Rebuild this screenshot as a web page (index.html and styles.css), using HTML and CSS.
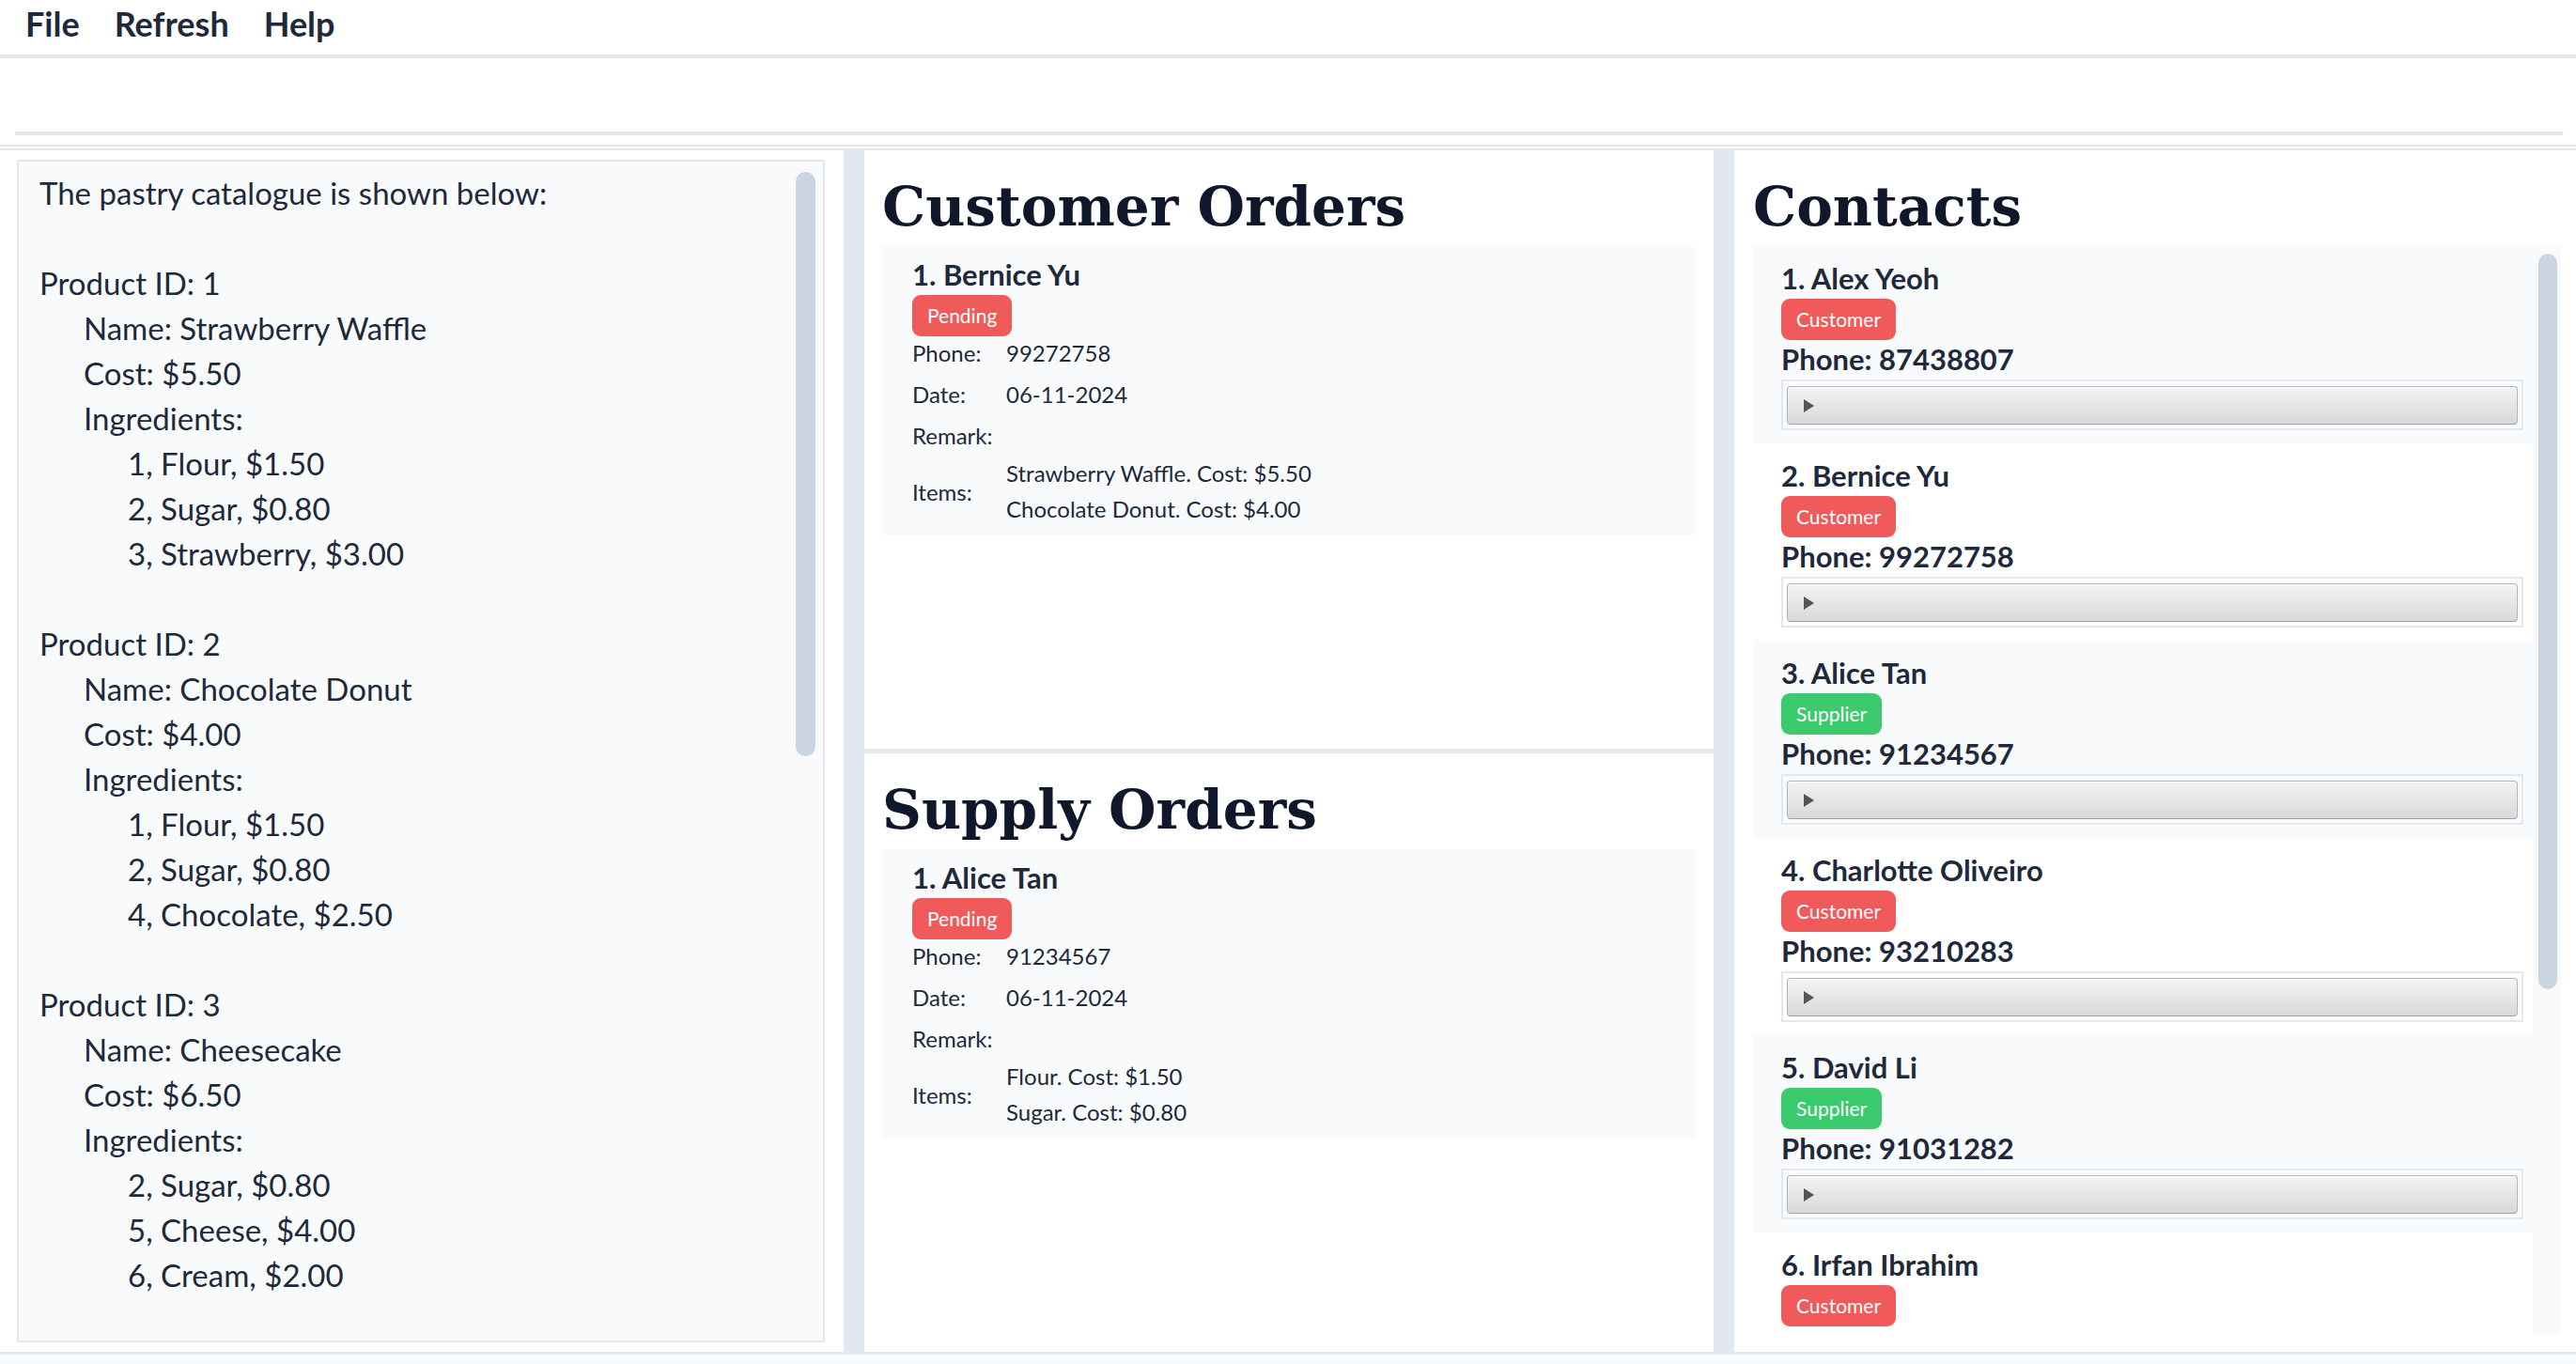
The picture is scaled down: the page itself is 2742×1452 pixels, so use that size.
FILE: index.html
```html
<!DOCTYPE html>
<html lang="en">
<head>
<meta charset="utf-8">
<title>Pastry Orders</title>
<link rel="stylesheet" href="styles.css">
</head>
<body>
<nav class="menubar">
  <span class="menu-item">File</span>
  <span class="menu-item">Refresh</span>
  <span class="menu-item">Help</span>
</nav>
<div class="command"></div>
<div class="result"></div>
<main class="main">
  <section class="left">
    <div class="catalogue">
      <div class="ln">The pastry catalogue is shown below:</div>
      <div class="ln blank"></div>
      <div class="ln">Product ID: 1</div>
      <div class="ln i1">Name: Strawberry Waffle</div>
      <div class="ln i1">Cost: $5.50</div>
      <div class="ln i1">Ingredients:</div>
      <div class="ln i2">1, Flour, $1.50</div>
      <div class="ln i2">2, Sugar, $0.80</div>
      <div class="ln i2">3, Strawberry, $3.00</div>
      <div class="ln blank"></div>
      <div class="ln">Product ID: 2</div>
      <div class="ln i1">Name: Chocolate Donut</div>
      <div class="ln i1">Cost: $4.00</div>
      <div class="ln i1">Ingredients:</div>
      <div class="ln i2">1, Flour, $1.50</div>
      <div class="ln i2">2, Sugar, $0.80</div>
      <div class="ln i2">4, Chocolate, $2.50</div>
      <div class="ln blank"></div>
      <div class="ln">Product ID: 3</div>
      <div class="ln i1">Name: Cheesecake</div>
      <div class="ln i1">Cost: $6.50</div>
      <div class="ln i1">Ingredients:</div>
      <div class="ln i2">2, Sugar, $0.80</div>
      <div class="ln i2">5, Cheese, $4.00</div>
      <div class="ln i2">6, Cream, $2.00</div>
      <div class="thumb thumb-left"></div>
    </div>
  </section>
  <div class="divider"></div>
  <section class="orders">
    <div class="order-section customer">
      <h2 class="title">Customer Orders</h2>
      <div class="order-card">
        <div class="name">1. Bernice Yu</div>
        <span class="badge red">Pending</span>
        <div class="fields">
          <span class="label">Phone:</span><span class="value">99272758</span>
          <span class="label">Date:</span><span class="value">06-11-2024</span>
          <span class="label">Remark:</span><span class="value"></span>
          <span class="label">Items:</span>
          <div class="item-lines"><span>Strawberry Waffle. Cost: $5.50</span><span>Chocolate Donut. Cost: $4.00</span></div>
        </div>
      </div>
    </div>
    <div class="order-section supply">
      <h2 class="title">Supply Orders</h2>
      <div class="order-card">
        <div class="name">1. Alice Tan</div>
        <span class="badge red">Pending</span>
        <div class="fields">
          <span class="label">Phone:</span><span class="value">91234567</span>
          <span class="label">Date:</span><span class="value">06-11-2024</span>
          <span class="label">Remark:</span><span class="value"></span>
          <span class="label">Items:</span>
          <div class="item-lines"><span>Flour. Cost: $1.50</span><span>Sugar. Cost: $0.80</span></div>
        </div>
      </div>
    </div>
  </section>
  <div class="divider"></div>
  <section class="contacts">
    <h2 class="title">Contacts</h2>
    <div class="contact-list">
      <div class="contact">
        <div class="name">1. Alex Yeoh</div>
        <span class="badge red">Customer</span>
        <div class="phone">Phone: 87438807</div>
        <div class="pane"><div class="pane-bar"><svg class="arrow" width="12" height="14" viewBox="0 0 12 14"><polygon points="0,0 11,7 0,14" fill="#555"/></svg></div></div>
      </div>
      <div class="contact">
        <div class="name">2. Bernice Yu</div>
        <span class="badge red">Customer</span>
        <div class="phone">Phone: 99272758</div>
        <div class="pane"><div class="pane-bar"><svg class="arrow" width="12" height="14" viewBox="0 0 12 14"><polygon points="0,0 11,7 0,14" fill="#555"/></svg></div></div>
      </div>
      <div class="contact">
        <div class="name">3. Alice Tan</div>
        <span class="badge green">Supplier</span>
        <div class="phone">Phone: 91234567</div>
        <div class="pane"><div class="pane-bar"><svg class="arrow" width="12" height="14" viewBox="0 0 12 14"><polygon points="0,0 11,7 0,14" fill="#555"/></svg></div></div>
      </div>
      <div class="contact">
        <div class="name">4. Charlotte Oliveiro</div>
        <span class="badge red">Customer</span>
        <div class="phone">Phone: 93210283</div>
        <div class="pane"><div class="pane-bar"><svg class="arrow" width="12" height="14" viewBox="0 0 12 14"><polygon points="0,0 11,7 0,14" fill="#555"/></svg></div></div>
      </div>
      <div class="contact">
        <div class="name">5. David Li</div>
        <span class="badge green">Supplier</span>
        <div class="phone">Phone: 91031282</div>
        <div class="pane"><div class="pane-bar"><svg class="arrow" width="12" height="14" viewBox="0 0 12 14"><polygon points="0,0 11,7 0,14" fill="#555"/></svg></div></div>
      </div>
      <div class="contact">
        <div class="name">6. Irfan Ibrahim</div>
        <span class="badge red">Customer</span>
      </div>
      <div class="thumb thumb-right"></div>
    </div>
  </section>
</main>
<footer class="status"></footer>
</body>
</html>
```
FILE: styles.css
```css
html, body {
  margin: 0;
  padding: 0;
}
body {
  width: 2742px;
  height: 1452px;
  display: flex;
  flex-direction: column;
  overflow: hidden;
  background: #ffffff;
  color: #1e293b;
  font-family: Lato, "Noto Sans", sans-serif;
}

.menubar {
  box-sizing: border-box;
  height: 62px;
  padding: 4px 0 0 27px;
  border-bottom: 4px solid #e2e8f0;
  display: flex;
  gap: 37px;
  font-size: 36px;
  font-weight: 700;
  line-height: 42px;
  color: #1e293b;
}

.command {
  height: 78px;
  margin: 0 14px 0 16px;
  border-bottom: 4px solid #e2e8f0;
}

.result {
  margin-top: 10px;
  height: 2px;
  border-top: 2px solid #e2e8f0;
  border-bottom: 2px solid #e2e8f0;
}

.main {
  height: 1279px;
  display: flex;
}

.status {
  flex: 1;
  border-top: 3px solid #e2e8f0;
  background: #f8fafc;
}

.left {
  box-sizing: border-box;
  width: 898px;
  padding: 10px 20px 10px 18px;
  display: flex;
}

.catalogue {
  flex: 1;
  position: relative;
  overflow: hidden;
  border: 2px solid #e2e8f0;
  background: #f8fafc;
  padding: 9px 22px;
  font-size: 33px;
  line-height: 48px;
  color: #1e293b;
}

.ln {
  height: 48px;
  white-space: pre;
}
.i1 { padding-left: 47px; }
.i2 { padding-left: 94px; }

.thumb {
  position: absolute;
  background: #cbd5e1;
}
.thumb-left {
  top: 11px;
  right: 8px;
  width: 21px;
  height: 622px;
  border-radius: 11px;
}

.divider {
  width: 22px;
  background: #e2e8f0;
}

.orders {
  width: 904px;
  display: flex;
  flex-direction: column;
}

.order-section {
  box-sizing: border-box;
  padding: 26px 20px 0 19px;
}
.order-section.customer {
  height: 642px;
  border-bottom: 5px solid #e2e8f0;
}
.order-section.supply {
  flex: 1;
}

.title {
  margin: 0 0 7px;
  font-family: "DejaVu Serif", "Liberation Serif", serif;
  font-weight: 700;
  font-size: 58px;
  line-height: 69px;
  color: #0f172a;
}

.order-card {
  background: #f8fafc;
  padding: 10px 32px 13px;
}

.name {
  font-size: 31px;
  font-weight: 700;
  line-height: 40px;
  color: #1e293b;
}

.badge {
  display: inline-block;
  margin-top: 2px;
  height: 44px;
  line-height: 44px;
  padding: 0 16px;
  border-radius: 9px;
  font-size: 21px;
  color: #ffffff;
  vertical-align: top;
}
.badge.red { background: #f05a5a; }
.badge.green { background: #3bca6d; }

.fields {
  display: grid;
  grid-template-columns: 100px 1fr;
  grid-auto-rows: minmax(34px, auto);
  row-gap: 10px;
  align-items: center;
  font-size: 24px;
  color: #1e293b;
}

.item-lines {
  display: flex;
  flex-direction: column;
  gap: 10px;
  line-height: 28px;
}

.contacts {
  flex: 1;
  display: flex;
  flex-direction: column;
  padding: 26px 16px 19px 20px;
  min-width: 0;
}

.contact-list {
  flex: 1;
  position: relative;
  overflow: hidden;
  background: #f8fafc;
}

.contact {
  box-sizing: border-box;
  width: calc(100% - 30px);
  height: 210px;
  padding: 14px 10px 14px 30px;
}
.contact:nth-child(even) {
  background: #ffffff;
}

.phone {
  margin-top: 2px;
  font-size: 31px;
  font-weight: 700;
  line-height: 36px;
  color: #1e293b;
}

.pane {
  margin-top: 4px;
  border: 2px solid #e2e8f0;
  padding: 5px 4px 4px;
}

.pane-bar {
  box-sizing: border-box;
  height: 41px;
  display: flex;
  align-items: center;
  padding-left: 17px;
  border: 1px solid #b4b4b4;
  border-bottom-color: #9e9e9e;
  border-radius: 4px;
  background: linear-gradient(#f3f3f3, #d9d9d9);
  box-shadow: inset 0 1px 0 #ffffff;
}

.thumb-right {
  top: 8px;
  right: 4px;
  width: 20px;
  height: 783px;
  border-radius: 10px;
}
```
